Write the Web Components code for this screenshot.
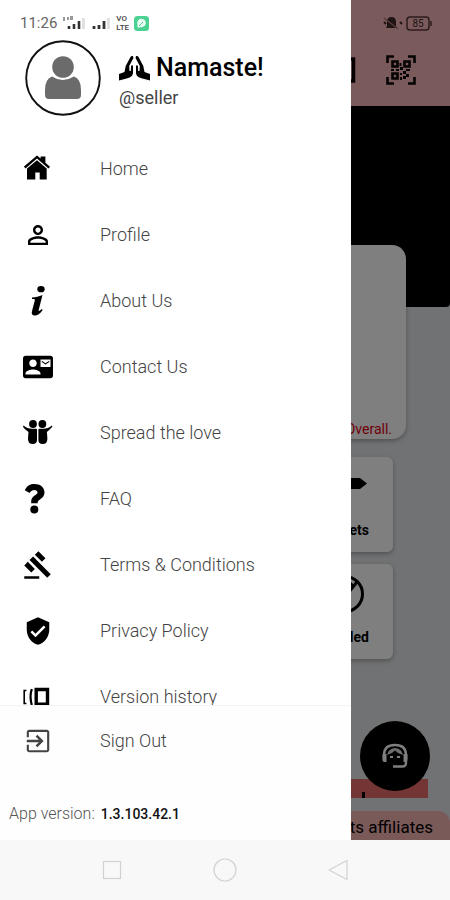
<!DOCTYPE html>
<html lang="en">
<head>
<meta charset="utf-8">
<meta name="viewport" content="width=device-width, initial-scale=1">
<title>Seller menu</title>
<style>
  html, body { margin: 0; height: 100%; }
  body { font-family: Roboto, "Liberation Sans", sans-serif; color: #000; background: #f8f8f8; }
</style>
</head>
<body>
<phone-screen>
  <store-page slot="page"></store-page>
  <side-drawer slot="drawer">
    <user-summary slot="head" name="Namaste!" handle="@seller"></user-summary>
    <drawer-item icon="home">Home</drawer-item>
    <drawer-item icon="person">Profile</drawer-item>
    <drawer-item icon="info">About Us</drawer-item>
    <drawer-item icon="contact">Contact Us</drawer-item>
    <drawer-item icon="friends">Spread the love</drawer-item>
    <drawer-item icon="question">FAQ</drawer-item>
    <drawer-item icon="gavel">Terms &amp; Conditions</drawer-item>
    <drawer-item icon="shield">Privacy Policy</drawer-item>
    <drawer-item icon="versions">Version history</drawer-item>
    <drawer-item slot="foot" icon="exit">Sign Out</drawer-item>
    <app-version slot="foot" number="1.3.103.42.1"></app-version>
  </side-drawer>
  <system-nav slot="nav"></system-nav>
</phone-screen>

<script>
const ICONS = {
  home: '<path d="M1 12.500 14 1.500l3.600 3V2.500h4.800v6.200l4.600 4-1.500 1.700L14 4.600 2.500 14.400 1 12.700Z"/><path d="M4 14.600 14 6.200l9.700 8.400V25.500h-7v-7h-4.400v7H4Z"/>',
  person: '<g transform="scale(1.25)"><path d="M12 5.9c1.16 0 2.1.94 2.1 2.1s-.94 2.1-2.1 2.1S9.9 9.16 9.9 8s.94-2.1 2.1-2.1m0 9c2.97 0 6.1 1.46 6.1 2.1v1.1H5.9V17c0-.64 3.13-2.1 6.1-2.1M12 4C9.79 4 8 5.79 8 8s1.79 4 4 4 4-1.79 4-4-1.79-4-4-4zm0 9c-2.67 0-8 1.34-8 4v3h16v-3c0-2.66-5.33-4-8-4z"/></g>',
  info: '<ellipse cx="18" cy="3.2" rx="3.7" ry="3.1"/><path d="M9 11.6c4-.2 6.700-1.200 10.500-2.600L15.800 23.500c-.4 1.600 0 1.900 1.200 1l1.800-1.600.9 1C17 27.600 14.500 29.400 11.700 29.400c-2.600 0-3.400-1.500-2.800-3.900L11.800 14.600c.3-1.300-.3-1.700-2.800-1.600Z"/>',
  contact: '<g transform="scale(1.25)"><path d="M21 8V7l-3 2-3-2v1l3 2 3-2zm1-5H2C.9 3 0 3.900 0 5v14c0 1.100.9 2 2 2h20c1.100 0 1.990-.9 1.990-2L24 5c0-1.100-.9-2-2-2zM8 6c1.660 0 3 1.340 3 3s-1.340 3-3 3-3-1.340-3-3 1.340-3 3-3zm6 12H2v-1c0-2 4-3.100 6-3.100s6 1.100 6 3.100v1zm8-6h-8V6h8v6z"/></g>',
  friends: '<circle cx="10" cy="6" r="3.900"/><circle cx="19.400" cy="6" r="3.900"/><path d="M.6 7.400C3 9.700 6 10.700 9 10.700h4q1 0 1 1V22q0 4-4.300 4-4.700 0-4.700-5.500.3-4 .5-6.500C3.500 12.500 1.200 11 0 8.800ZM28.800 7.400C26.400 9.700 23.400 10.700 20.400 10.700h-4q-1 0-1 1V22q0 4 4.300 4 4.700 0 4.700-5.500-.3-4-.5-6.500 2-1.500 5.500-5.200Z"/>',
  question: '<path d="M1.800 6.200C3.800 2 7 .1 11.500 .1c5.700 0 10 3.400 10 8.200 0 3.900-2.300 5.700-4.500 7.200-1.600 1.100-2.300 1.700-2.300 3v.7H8.200v-1.500c0-3.700 2.200-5.300 4.300-6.700 1.400-1 2-1.400 2-2.500 0-1.500-1.300-2.500-3.300-2.500-1.900 0-3 .8-4.600 2.900Z"/><circle cx="11.300" cy="25.500" r="4"/>',
  gavel: '<g transform="scale(1.25)"><path d="M1 21h12v2H1zM5.240 8.070l2.830-2.830 14.140 14.140-2.830 2.830zM12.320 1l5.660 5.660-2.830 2.830-5.660-5.660zM3.830 9.480l5.660 5.660-2.830 2.830L1 12.310z"/></g>',
  shield: '<g transform="scale(1.25)"><path d="M12 1L3 5v6c0 5.550 3.840 10.740 9 12 5.160-1.260 9-6.450 9-12V5l-9-4zm-2 16l-4-4 1.410-1.410L10 14.170l6.590-6.590L18 9l-8 8z"/></g>',
  versions: '<g fill="none" stroke="#000"><path d="M13.200 7.500h11.300v14.600H13.200Z" stroke-width="3.400"/><path d="M8.800 7Q6.300 14.500 8.800 23" stroke-width="2.200"/><path d="M3.400 8.500H1.200v13h2.200" stroke-width="1.600"/></g>',
  exit: '<g transform="scale(1.25)" fill="#444"><path d="M10.090 15.590L11.500 17l5-5-5-5-1.410 1.410L12.670 11H3v2h9.670l-2.580 2.590zM19 3H5c-1.110 0-2 .9-2 2v4h1.700V4.700h14.600v14.600H4.700V15H3v4c0 1.100.89 2 2 2h14c1.100 0 2-.9 2-2V5c0-1.100-.9-2-2-2z"/></g>'
};

function define(name, render) {
  customElements.define(name, class extends HTMLElement {
    constructor() { super(); this.attachShadow({ mode: 'open' }); }
    connectedCallback() { this.shadowRoot.innerHTML = render(this); }
  });
}

define('phone-screen', () => `
<style>
  :host { display: grid; grid-template-rows: 1fr 60px; height: 100vh; overflow: hidden; }
  .stage { position: relative; overflow: hidden; min-height: 0; }
  ::slotted([slot=page]) { height: 100%; }
  .scrim { position: absolute; inset: 0; background: rgba(0,0,0,.5); }
  ::slotted([slot=drawer]) { position: absolute; inset: 0 auto 0 0; width: 78%; }
</style>
<div class="stage"><slot name="page"></slot><div class="scrim"></div><slot name="drawer"></slot></div>
<slot name="nav"></slot>`);

define('signal-status', () => `
<style>
  :host { display: flex; align-items: center; height: 18px; gap: 5px; color: #666; font-size: 15px; line-height: 18px; }
  .net { display: grid; font-size: 8px; line-height: 9px; font-weight: 500; color: #444; }
  svg { display: block; }
</style>
<span>11:26</span>
<svg width="25" height="14" viewBox="0 0 25 14"><path d="M2 1v4M6 1v3M8 1h3M8 3h3" stroke="#777" stroke-width="1.500"/><path d="M7 10v3M12 8v5M17 5v8" stroke="#333" stroke-width="2.600"/><path d="M21.500 2v11" stroke="#ddd" stroke-width="2.600"/></svg>
<svg width="19" height="14" viewBox="0 0 19 14"><path d="M2 10v3M7 9v4M12 5v8" stroke="#333" stroke-width="2.800"/><path d="M16.500 2v11" stroke="#ddd" stroke-width="2.600"/></svg>
<span class="net"><span>VO</span><span>LTE</span></span>
<svg width="15" height="15" viewBox="0 0 15 15"><rect width="15" height="15" rx="3.500" fill="#4bd292"/><path d="M3.500 11.500V8.500a4.300 4.300 0 1 1 4 2.800Z" fill="#e9fff3"/><path d="m5 10 4-4" stroke="#4bd292"/></svg>`);

define('user-summary', el => `
<style>
  :host { display: flex; gap: 18px; padding: 8px 16px 20px 25px; }
  .avatar { flex: none; display: block; width: 76px; height: 76px; }
  .text { padding-top: 12px; }
  .name { display: flex; align-items: center; gap: 6px; height: 32px; margin: 0; font-size: 25px; font-weight: 500; line-height: 32px; }
  .handle { margin: 4px 0 0; font-size: 18px; line-height: 20px; color: #444; }
</style>
<svg class="avatar" viewBox="0 0 76 76"><circle cx="38" cy="38" r="36.800" fill="#fff" stroke="#111" stroke-width="1.900"/><circle cx="38" cy="27" r="10.800" fill="#6b6b6b"/><path d="M27 36.500Q37.500 43.500 49 36.500 56 39 56 50v5q0 4-4 4H24q-4 0-4-4v-5Q20 39 27 36.500Z" fill="#6b6b6b"/></svg>
<div class="text">
  <h1 class="name"><svg width="31" height="26" viewBox="0 0 31 26"><path d="M14 1.200c-1-.5-2-.1-2.500.9L6.700 11 5.500 17 0 19v6.500l8.500-2.200c3.500-1 5.500-2.500 5.500-6V11c0-1-1.800-1-1.900 0l-.3 5h-1.300l-.3-5L14.500 3ZM17 1.200c1-.5 2-.1 2.500.9L24.300 11l1.200 6 5.500 2v6.500l-8.500-2.200c-3.500-1-5.500-2.500-5.500-6V11c0-1 1.800-1 1.900 0l.3 5h1.300l.3-5L16.500 3Z"/></svg>${el.getAttribute('name')}</h1>
  <p class="handle">${el.getAttribute('handle')}</p>
</div>`);

define('drawer-item', el => `
<style>
  :host { display: block; flex: none; }
  a { display: flex; align-items: center; gap: 47px; height: 66px; padding: 0 23px; color: #444; text-decoration: none; font-size: 18px; font-weight: 300; line-height: 24px; }
  svg { flex: none; width: 30px; height: 30px; overflow: visible; }
</style>
<a href="#${el.getAttribute('icon')}"><svg viewBox="0 0 30 30" fill="#000" aria-hidden="true">${ICONS[el.getAttribute('icon')]}</svg><slot></slot></a>`);

define('app-version', el => `
<style>
  :host { display: flex; align-items: baseline; gap: 6px; padding: 28px 9px 14px; font-size: 16px; font-weight: 300; line-height: 24px; color: #555; }
  b { font-size: 14px; font-weight: 500; color: #111; }
</style>
<span>App version:</span><b>${el.getAttribute('number')}</b>`);

define('side-drawer', () => `
<style>
  :host { display: flex; flex-direction: column; background: #fff; }
  .status { padding: 14px 20px 0; }
  nav { flex: 1; min-height: 0; overflow: hidden; display: flex; flex-direction: column; }
  footer { padding-top: 2px; border-top: 1px solid #f4f4f4; background: #fefefe; }
</style>
<div class="status"><signal-status></signal-status></div>
<slot name="head"></slot>
<nav><slot></slot></nav>
<footer><slot name="foot"></slot></footer>`);

define('tile-card', () => `
<style>
  :host { box-sizing: border-box; display: flex; flex-direction: column; align-items: flex-end; justify-content: space-between; width: 96px; height: 95px; padding: 10px 24px 12px; border-radius: 6px; background: #fff; box-shadow: 0 2px 5px rgba(0,0,0,.3); font-size: 14px; font-weight: 700; line-height: 20px; }
</style>
<slot name="art"></slot><slot></slot>`);

define('store-page', () => `
<style>
  :host { display: flex; flex-direction: column; background: #e3e5e7; overflow: hidden; }
  header { box-sizing: border-box; flex: none; height: 106px; padding: 14px 18px 0; background: #f4b5b7; }
  .status { display: flex; justify-content: flex-end; align-items: center; gap: 3px; height: 18px; }
  .tools { display: flex; justify-content: flex-end; align-items: center; gap: 30px; height: 76px; padding-right: 16px; }
  svg { display: block; }
  button { padding: 0; border: 0; background: none; }
  .banner { flex: none; height: 201px; border-radius: 0 0 4px 4px; background: #000; }
  .overall { box-sizing: border-box; flex: none; display: flex; align-items: flex-end; justify-content: flex-end; height: 194px; margin: -62px 44px 0; padding: 0 14px; border-radius: 14px; background: #fff; box-shadow: 0 2px 5px rgba(0,0,0,.3); color: #e00010; font-size: 14px; line-height: 20px; }
  .tiles { display: flex; flex-direction: column; align-items: flex-end; gap: 12px; padding: 18px 57px 0; }
  .sale { flex: none; display: flex; justify-content: flex-end; align-items: flex-end; height: 19px; margin: auto 22px 0 0; padding-right: 63px; background: #e86c68; }
  .sale i { width: 3px; height: 6px; background: #000; }
  .affiliates { flex: none; margin-top: 13px; padding: 4px 17px 1px; height: 24px; border-radius: 0 12px 0 0; background: #f4b2b2; font-size: 17px; line-height: 24px; text-align: right; }
  .help { position: absolute; right: 20px; bottom: 49px; width: 70px; height: 70px; display: grid; place-items: center; border-radius: 50%; background: #000; }
</style>
<header>
  <div class="status">
    <svg width="20" height="16" viewBox="0 0 20 16"><path d="M4 11V7q0-5 4.500-5T13 7v4l1 2H3Z" fill="#402628"/><path d="m1 3 14 11" stroke="#a97577" stroke-width="1.500"/><path d="m1 7 2 2M17 7l2 2" stroke="#402628" stroke-width="2"/></svg>
    <svg width="26" height="15" viewBox="0 0 26 15"><rect x="1" y="1" width="22" height="13" rx="3" fill="none" stroke="#593638" stroke-width="1.500"/><path d="M25 5v5" stroke="#593638" stroke-width="1.500"/><text x="12" y="11" text-anchor="middle" font-size="10" fill="#402628">85</text></svg>
  </div>
  <div class="tools">
    <svg width="20" height="26" viewBox="0 0 20 26"><rect x="1.500" y="2" width="16" height="22" fill="none" stroke="#100" stroke-width="3.500"/></svg>
    <button aria-label="Scan code"><svg width="30" height="30" viewBox="0 0 30 30"><g fill="none" stroke="#0b0606" stroke-width="2.600"><path d="M1.500 8V1.500H8M22 1.500h6.500V8M28.500 22v6.500H22M8 28.500H1.500V22"/><path d="M6.500 6.500h5v5h-5ZM18.500 6.500h5v5h-5ZM6.500 18.500h5v5h-5Z"/></g><path d="M13.500 8h2v3h-2zM14 12h3v3h-3zM10 14h3v2h-3zM5 14h3v2H5zM20 14h4v2h-4zM17 16h3v3h-3zM14 18h2v2h-2zM20 19h3v3h-3zM17 21h3v3h-3zM14 22h2v3h-2z" fill="#0b0606"/></svg></button>
  </div>
</header>
<div class="banner"></div>
<div class="overall">Overall.</div>
<div class="tiles">
  <tile-card><svg slot="art" width="24" height="34" viewBox="0 0 24 34"><path d="M0 11h15l7 5.500-7 5.500H0Z"/></svg>ets</tile-card>
  <tile-card><svg slot="art" width="40" height="40" viewBox="0 0 40 40" style="margin-right:4px"><g fill="none" stroke="#000" stroke-width="3"><circle cx="20" cy="20" r="17.500"/><path d="M32 8 10 35M23 7l6 6"/></g></svg>led</tile-card>
</div>
<div class="sale"><i></i></div>
<div class="affiliates">ts affiliates</div>
<button class="help" aria-label="Support"><svg width="28" height="26" viewBox="0 0 28 26"><g fill="none" stroke="#fff" stroke-width="2.400"><path d="M3 18v-6Q3 2 14 2t11 10v8q0 3.500-4 3.500h-9"/></g><path d="M1.500 11h4v8h-2q-2 0-2-3ZM26.500 11h-4v8h2q2 0 2-3Z" fill="#fff"/><path d="M6 12q1-6 8-7 7 1 8 7-5-1-8-4.500Q11 11 6 12Z" fill="#ddd"/><path d="M9 13h3v2H9zM16 13h3v2h-3z" fill="#fff"/></svg></button>`);

define('system-nav', () => `
<style>
  :host { display: grid; grid-template-columns: repeat(3, 1fr); align-items: center; justify-items: center; padding: 0 56px; background: #f8f8f8; }
  button { padding: 0; border: 0; background: none; }
  svg { display: block; fill: none; stroke: #d2d2d2; stroke-width: 1.200; }
</style>
<button aria-label="Recent apps"><svg width="24" height="24" viewBox="0 0 24 24"><rect x="3.500" y="3.500" width="17" height="17"/></svg></button>
<button aria-label="Home"><svg width="24" height="24" viewBox="0 0 24 24"><circle cx="12" cy="12" r="11"/></svg></button>
<button aria-label="Back"><svg width="24" height="24" viewBox="0 0 24 24"><path d="M21 2.500v19L3 12Z" stroke-linejoin="round"/></svg></button>`);
</script>
</body>
</html>
